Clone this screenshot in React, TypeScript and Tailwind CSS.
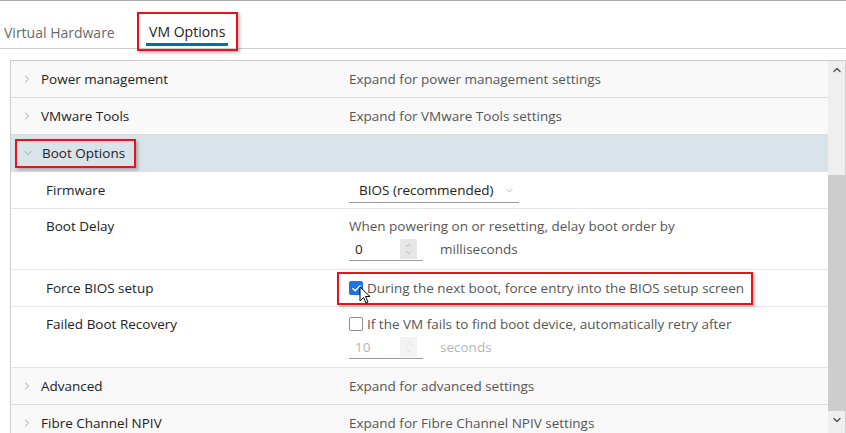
import { Check, ChevronDown, ChevronRight, ChevronUp } from "lucide-react";

const font = { fontFamily: '"Open Sans", "Liberation Sans", sans-serif' };

const Chevron = ({ open }: { open?: boolean }) =>
  open ? (
    <ChevronDown size={12} strokeWidth={1.5} className="text-[#8a8a8a]" />
  ) : (
    <ChevronRight size={12} strokeWidth={1.5} className="text-[#8a8a8a]" />
  );

const SectionRow = ({
  label,
  desc,
  open,
  boxed,
  className = "",
}: {
  label: string;
  desc?: string;
  open?: boolean;
  boxed?: boolean;
  className?: string;
}) => (
  <div className={`flex h-[37px] items-center border-b border-[#dddddd] ${className}`}>
    <div className="flex w-[338px] shrink-0 items-center">
      {boxed ? (
        <div className="ml-[4px] flex h-[29px] items-center border-2 border-[#e8121a] pl-[5px] pr-[9px] shadow-[2px_2px_3px_rgba(0,0,0,0.25)]">
          <Chevron open={open} />
          <span className="ml-[8px] text-[13.5px] text-[#222]">{label}</span>
        </div>
      ) : (
        <div className="ml-[10px] flex items-center">
          <Chevron open={open} />
          <span className="ml-[8px] text-[13.5px] text-[#222]">{label}</span>
        </div>
      )}
    </div>
    {desc && <span className="text-[13.5px] text-[#565656]">{desc}</span>}
  </div>
);

const Spinner = ({ disabled }: { disabled?: boolean }) => (
  <div
    className={`flex h-[20px] w-[17px] flex-col items-center justify-center ${
      disabled ? "bg-[#f3f3f3] text-[#d0d0d0]" : "bg-[#e6e6e6] text-[#9a9a9a]"
    }`}
  >
    <ChevronUp size={9} strokeWidth={1.5} className="-mb-[2px]" />
    <ChevronDown size={9} strokeWidth={1.5} />
  </div>
);

const NumberField = ({ value, disabled }: { value: string; disabled?: boolean }) => (
  <div className="flex h-[24px] w-[74px] items-center justify-between border-b border-[#9a9a9a] pl-[6px] pr-[6px]">
    <span className={`text-[13.5px] ${disabled ? "text-[#b5b5b5]" : "text-[#222]"}`}>{value}</span>
    <Spinner disabled={disabled} />
  </div>
);

const App = () => {
  return (
    <div
      style={font}
      className="h-[433px] w-[846px] overflow-hidden border-t border-[#a8a8a8] bg-white"
    >
      {/* Tabs */}
      <div className="flex h-[48px] items-end border-b border-[#cccccc]">
        <div className="ml-[4px] flex h-[36px] items-start pt-[10px] text-[14px] text-[#6a6a6a]">
          Virtual Hardware
        </div>
        <div className="ml-[22px] mb-[-3px] flex h-[39px] w-[101px] items-start justify-center border-2 border-[#e8121a] pt-[7px] shadow-[2px_2px_3px_rgba(0,0,0,0.25)]">
          <div className="border-b-[3px] border-[#0072a3] px-[3px] pb-[1px] text-[14px] text-[#222]">
            VM Options
          </div>
        </div>
      </div>

      {/* Panel */}
      <div className="ml-[10px] mt-[11px] flex h-[374px] border border-[#cccccc]">
        <div className="flex-1 overflow-hidden">
          <SectionRow
            label="Power management"
            desc="Expand for power management settings"
            className="bg-[#f9f9f9]"
          />
          <SectionRow
            label="VMware Tools"
            desc="Expand for VMware Tools settings"
            className="bg-[#f9f9f9]"
          />
          <SectionRow label="Boot Options" open boxed className="bg-[#d9e3ea]" />

          {/* Firmware */}
          <div className="flex h-[37px] items-center border-b border-[#e6e6e6]">
            <div className="w-[338px] shrink-0 pl-[35px] text-[13.5px] text-[#222]">Firmware</div>
            <div className="flex h-[26px] w-[170px] items-center justify-between border-b border-[#9a9a9a] pl-[10px] pr-[4px] pt-[2px]">
              <span className="text-[13.5px] text-[#222]">BIOS (recommended)</span>
              <ChevronDown size={11} strokeWidth={1.5} className="text-[#9a9a9a]" />
            </div>
          </div>

          {/* Boot Delay */}
          <div className="flex h-[61px] border-b border-[#e6e6e6] pt-[7px]">
            <div className="w-[338px] shrink-0 pl-[35px] text-[13.5px] text-[#222]">Boot Delay</div>
            <div className="flex flex-col">
              <span className="text-[13.5px] text-[#565656]">
                When powering on or resetting, delay boot order by
              </span>
              <div className="mt-[1px] flex items-center gap-[17px]">
                <NumberField value="0" />
                <span className="text-[13.5px] text-[#565656]">milliseconds</span>
              </div>
            </div>
          </div>

          {/* Force BIOS setup */}
          <div className="flex h-[37px] items-center border-b border-[#e6e6e6]">
            <div className="w-[338px] shrink-0 pl-[35px] text-[13.5px] text-[#222]">Force BIOS setup</div>
            <div className="relative -ml-[12px] flex h-[33px] w-[416px] items-center border-2 border-[#e8121a] pl-[10px] shadow-[2px_2px_3px_rgba(0,0,0,0.25)]">
              <div className="flex h-[14px] w-[14px] items-center justify-center rounded-[2px] bg-[#1a73e8]">
                <Check size={11} strokeWidth={3} className="text-white" />
              </div>
              <span className="ml-[4px] text-[13.5px] text-[#565656]">
                During the next boot, force entry into the BIOS setup screen
              </span>
              <svg
                className="absolute left-[20px] top-[12px]"
                width="13"
                height="19"
                viewBox="0 0 13 19"
              >
                <path
                  d="M1 1 L1 15 L4.5 11.5 L7 17 L9 16 L6.5 10.5 L11 10.5 Z"
                  fill="white"
                  stroke="black"
                  strokeWidth="1"
                  strokeLinejoin="round"
                />
              </svg>
            </div>
          </div>

          {/* Failed Boot Recovery */}
          <div className="flex h-[61px] border-b border-[#e6e6e6] pt-[7px]">
            <div className="w-[338px] shrink-0 pl-[35px] text-[13.5px] text-[#222]">
              Failed Boot Recovery
            </div>
            <div className="flex flex-col">
              <div className="flex items-center">
                <div className="h-[14px] w-[14px] rounded-[2px] border-[1.5px] border-[#8c8c96] bg-white" />
                <span className="ml-[4px] text-[13.5px] text-[#565656]">
                  If the VM fails to find boot device, automatically retry after
                </span>
              </div>
              <div className="mt-[1px] flex items-center gap-[17px]">
                <NumberField value="10" disabled />
                <span className="text-[13.5px] text-[#b5b5b5]">seconds</span>
              </div>
            </div>
          </div>

          <SectionRow
            label="Advanced"
            desc="Expand for advanced settings"
            className="bg-[#f8f8f8]"
          />
          <SectionRow
            label="Fibre Channel NPIV"
            desc="Expand for Fibre Channel NPIV settings"
            className="bg-[#f8f8f8]"
          />
        </div>

        {/* Scrollbar */}
        <div className="flex w-[17px] shrink-0 flex-col bg-[#efefef]">
          <div className="flex h-[17px] items-center justify-center">
            <ChevronUp size={12} strokeWidth={3} className="text-[#5a5a5a]" />
          </div>
          <div className="mt-[97px] h-[236px] bg-[#cdcdcd]" />
          <div className="flex h-[18px] items-center justify-center">
            <ChevronDown size={12} strokeWidth={3} className="text-[#5a5a5a]" />
          </div>
        </div>
      </div>
    </div>
  );
};

export default App;
